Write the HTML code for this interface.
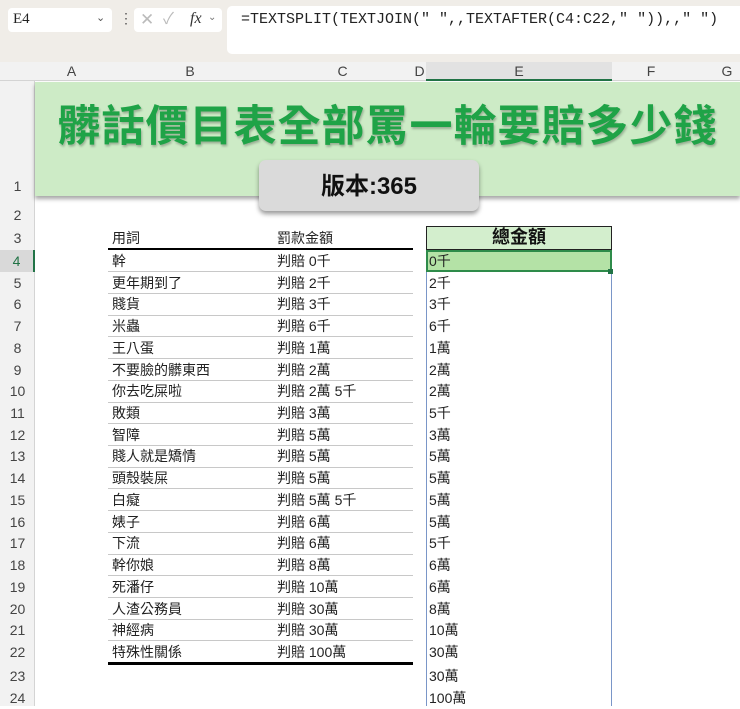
<!DOCTYPE html>
<html><head><meta charset="utf-8"><style>
*{margin:0;padding:0;box-sizing:border-box}
body{width:740px;height:706px;overflow:hidden;background:#fff;position:relative;font-family:"Liberation Sans","Noto Sans CJK TC",sans-serif;color:#222}
.a{position:absolute}
.rh{position:absolute;left:0;width:35px;background:#f2f2f2;border-right:1px solid #d4d4d4;text-align:center;font-size:14px;color:#444}
.ch{position:absolute;top:62px;height:18px;font-size:14px;color:#444;text-align:center;line-height:18px}
.t{position:absolute;font-size:14px;line-height:21px;white-space:nowrap;color:#222}
.ln{position:absolute;left:108px;width:305px;height:1px;background:#c8c8c8}
</style></head><body>
<div class="a" style="left:0;top:0;width:740px;height:62px;background:#f0ede8"></div>
<div class="a" style="left:8px;top:8px;width:104px;height:24px;background:#fff;border-radius:4px"></div>
<div class="t" style="left:13px;top:9px;font-family:'Liberation Serif',serif;font-size:15px">E4</div>
<div class="t" style="left:96px;top:8px;font-size:11px;color:#555">&#8964;</div>
<div class="t" style="left:119px;top:8px;font-size:14px;color:#555">&#8942;</div>
<div class="a" style="left:134px;top:8px;width:88px;height:24px;background:#fff;border-radius:4px"></div>
<div class="t" style="left:140px;top:9px;font-size:17px;color:#bbb">&#10005;</div>
<div class="t" style="left:163px;top:9px;font-size:16px;color:#bbb">&#10003;</div>
<div class="t" style="left:190px;top:8px;font-family:'Liberation Serif',serif;font-style:italic;font-size:16px;color:#333">fx</div>
<div class="t" style="left:208px;top:7px;font-size:10px;color:#777">&#8964;</div>
<div class="a" style="left:227px;top:6px;width:520px;height:48px;background:#fff;border-radius:5px"></div>
<div class="t" style="left:241px;top:9px;font-family:'Liberation Mono',monospace;font-size:15px;color:#222">=TEXTSPLIT(TEXTJOIN(" ",,TEXTAFTER(C4:C22," ")),," ")</div>
<div class="a" style="left:0;top:62px;width:740px;height:19px;background:#f2f2f2;border-bottom:1px solid #d4d4d4"></div>
<div class="a" style="left:426px;top:62px;width:186px;height:19px;background:#e2e2e2;border-bottom:2px solid #217346"></div>
<div class="ch" style="left:35px;width:73px">A</div>
<div class="ch" style="left:108px;width:164px">B</div>
<div class="ch" style="left:272px;width:141px">C</div>
<div class="ch" style="left:413px;width:13px">D</div>
<div class="ch" style="left:426px;width:186px">E</div>
<div class="ch" style="left:612px;width:78px">F</div>
<div class="ch" style="left:690px;width:74px">G</div>
<div class="rh" style="top:81px;height:625px"></div>
<div class="a" style="left:35px;top:82px;width:705px;height:114px;background:#cdebc6;box-shadow:0 3px 4px rgba(0,0,0,.35)"></div>
<div class="t" style="left:35px;width:705px;top:98px;text-align:center;font-size:43px;line-height:58px;font-weight:bold;color:#1fa347;letter-spacing:1px;text-shadow:1px 2px 2px rgba(0,0,0,.25)">髒話價目表全部罵一輪要賠多少錢</div>
<div class="a" style="left:259px;top:160px;width:220px;height:51px;background:#dadada;border-radius:7px;box-shadow:0 3px 5px rgba(0,0,0,.4)"></div>
<div class="t" style="left:259px;width:220px;top:172px;text-align:center;font-size:24px;line-height:30px;font-weight:bold;color:#111">版本:365</div>
<div class="rh" style="top:176px;height:20px;line-height:20px;background:transparent;border:none">1</div>
<div class="rh" style="top:204px;height:22px;line-height:22px;background:transparent;border:none">2</div>
<div class="rh" style="top:228px;height:21px;line-height:21px;background:transparent;border:none">3</div>
<div class="rh" style="top:250px;height:22px;line-height:22px;background:#d9d9d9;color:#217346;border-right:2px solid #217346">4</div>
<div class="t" style="left:112px;top:228px">用詞</div>
<div class="t" style="left:277px;top:228px">罰款金額</div>
<div class="a" style="left:108px;top:248px;width:305px;height:2px;background:#000"></div>
<div class="a" style="left:426px;top:226px;width:186px;height:24px;background:#d3eecd;border:1px solid #222"></div>
<div class="t" style="left:426px;width:186px;top:226px;text-align:center;font-size:18px;line-height:23px;font-weight:bold;color:#111">總金額</div>
<div class="a" style="left:426px;top:250px;width:186px;height:456px;border-left:1px solid #7a96c8;border-right:1px solid #7a96c8"></div>
<div class="a" style="left:426px;top:250px;width:186px;height:22px;background:#b4e2a6;border:2px solid #2e8b4a"></div>
<div class="a" style="left:608px;top:269px;width:5px;height:5px;background:#217346"></div>
<div id="rows"></div>
<script>
var d=[["幹","0千","0千"],["更年期到了","2千","2千"],["賤貨","3千","3千"],["米蟲","6千","6千"],["王八蛋","1萬","1萬"],["不要臉的髒東西","2萬","2萬"],["你去吃屎啦","2萬 5千","2萬"],["敗類","3萬","5千"],["智障","5萬","3萬"],["賤人就是矯情","5萬","5萬"],["頭殼裝屎","5萬","5萬"],["白癡","5萬 5千","5萬"],["婊子","6萬","5萬"],["下流","6萬","5千"],["幹你娘","8萬","6萬"],["死潘仔","10萬","6萬"],["人渣公務員","30萬","8萬"],["神經病","30萬","10萬"],["特殊性關係","100萬","30萬"],["","","30萬"],["","","100萬"]];
var h="";
for(var i=0;i<d.length;i++){
 var r=i+4,tp;
 if(r<=22)tp=250+i*21.72;else if(r==23)tp=665;else tp=687;
 if(r>4)h+='<div class="rh" style="top:'+tp+'px;height:22px;line-height:22px;background:transparent;border:none">'+r+'</div>';
 if(d[i][0]){h+='<div class="t" style="left:112px;top:'+(tp+1)+'px">'+d[i][0]+'</div><div class="t" style="left:277px;top:'+(tp+1)+'px">判賠 '+d[i][1]+'</div>';
  if(r<22)h+='<div class="ln" style="top:'+(tp+21.2)+'px"></div>';}
 h+='<div class="t" style="left:429px;top:'+(tp+1)+'px">'+d[i][2]+'</div>';
}
h+='<div class="a" style="left:108px;top:662px;width:305px;height:3px;background:#000"></div>';
document.getElementById("rows").innerHTML=h;
</script>
</body></html>
